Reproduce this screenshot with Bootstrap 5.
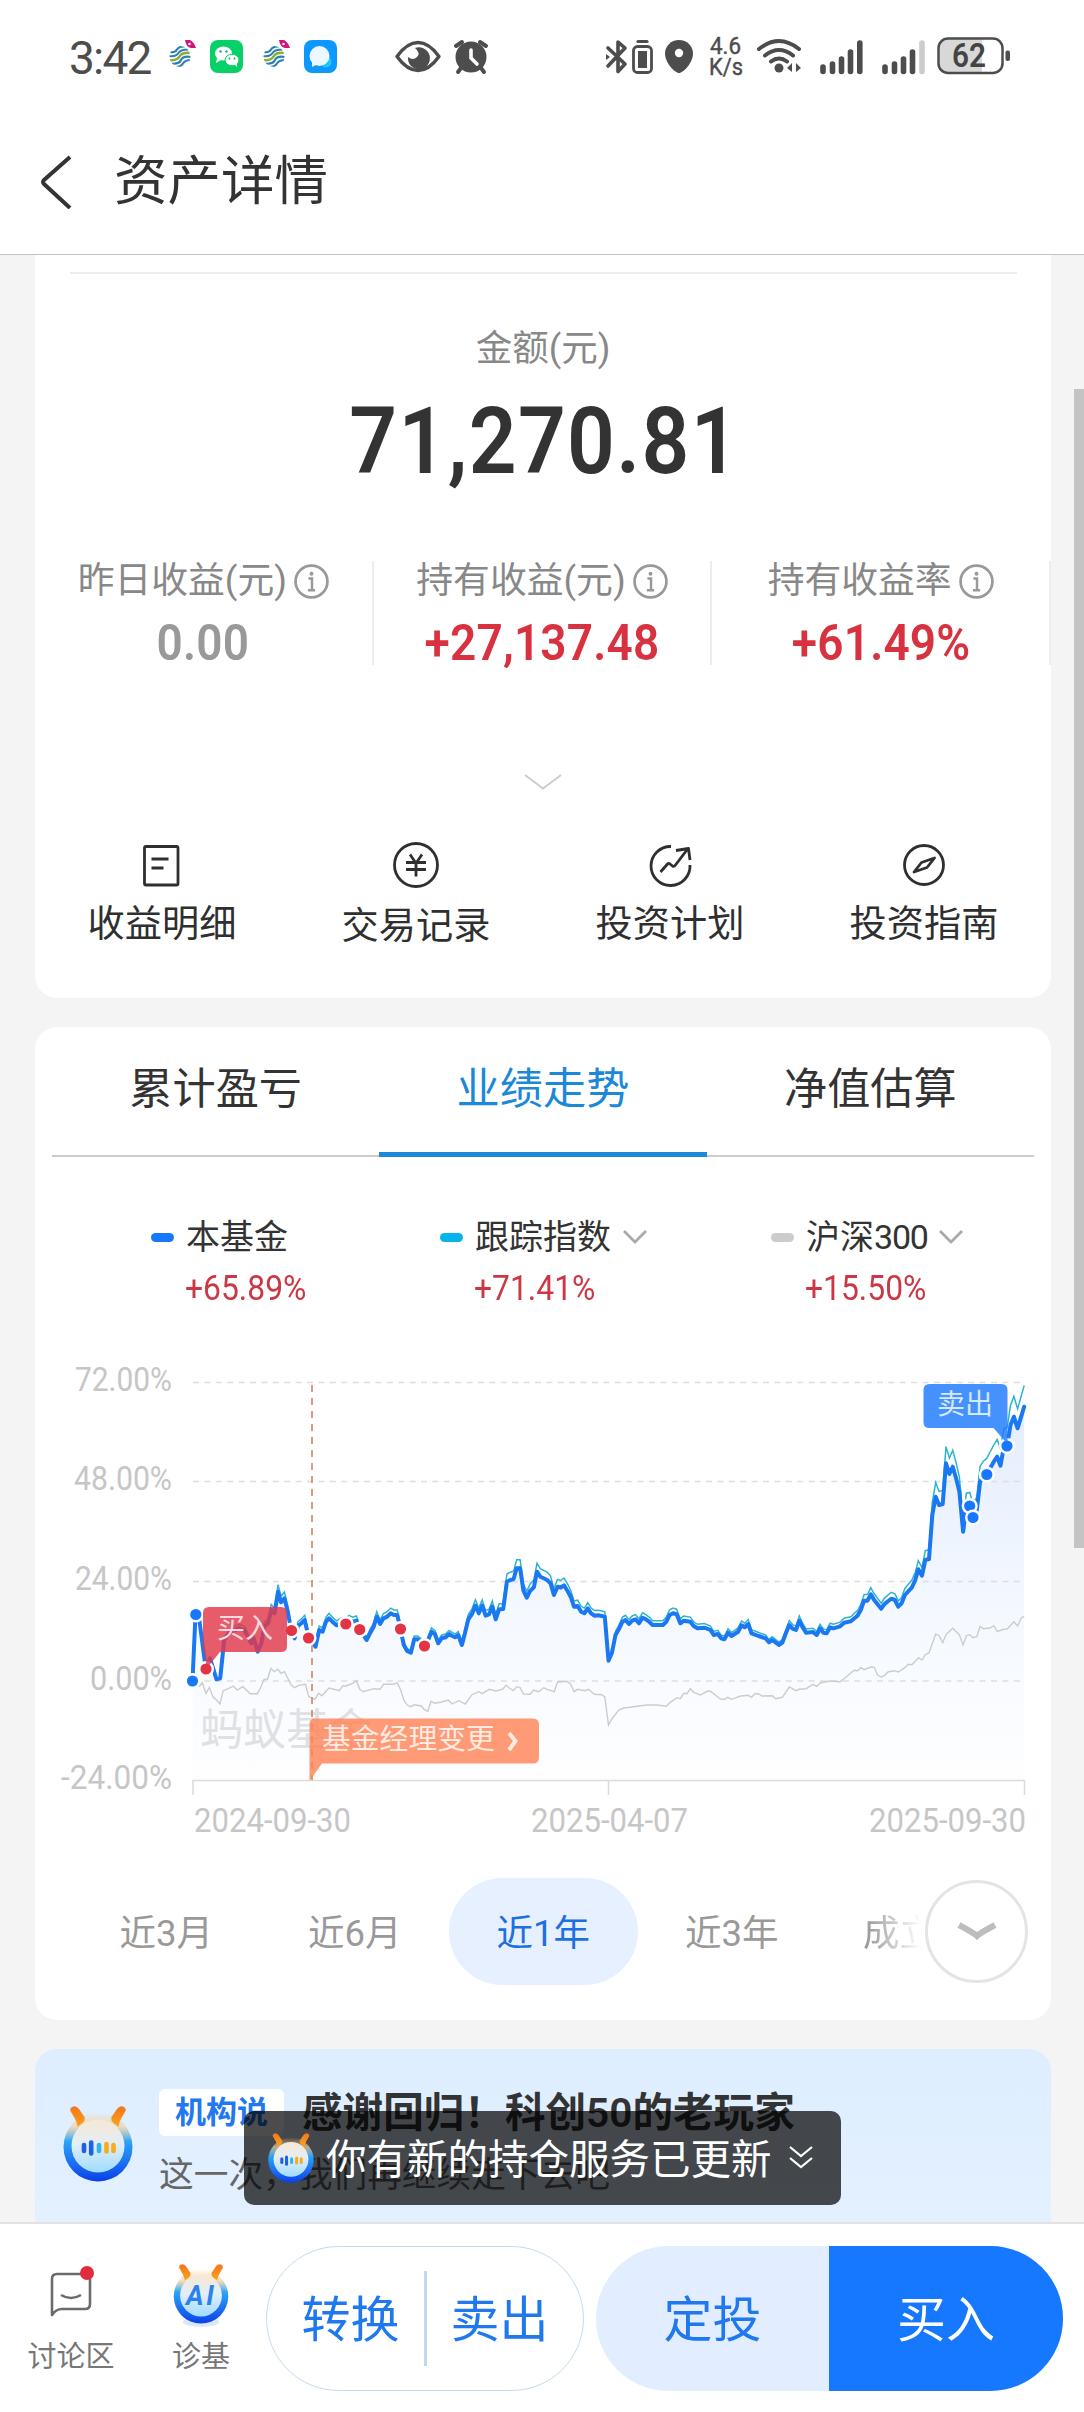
<!DOCTYPE html>
<html lang="zh-CN">
<head>
<meta charset="utf-8">
<meta name="viewport" content="width=device-width, initial-scale=1">
<title>资产详情</title>
<link href="https://cdn.jsdelivr.net/npm/bootstrap@5.3.0/dist/css/bootstrap.min.css" rel="stylesheet">
<style>
body{background:#f4f4f4;font-family:Roboto,"Noto Sans CJK SC",sans-serif;color:#333;height:2412px;overflow:hidden}
svg{display:block;flex:none}
svg text{font-family:Roboto,"Noto Sans CJK SC",sans-serif}
.top-area{height:255px;border-bottom:1px solid #c4c4c4}
.status-row{height:110px;padding-left:69px}
.clock{font-size:46px;line-height:50px;color:#4d4d4d;letter-spacing:-1.8px;width:96px;margin-top:33px}
.title-row{height:144px;padding:0 0 1px 41px}
.page-title{font-size:53.5px;line-height:60px;margin:0 0 0 41px;font-weight:400}
.panel{margin:0 33px 29px 35px;background:#fff;border-radius:22px}
.panel-asset{height:743px;border-radius:0 0 22px 22px;padding-top:17px}
.thin-line{height:2px;background:#ededed;margin:0 34px 0 35px}
.amount-label{font-size:36.5px;line-height:50px;color:#888;margin-top:50px}
.amount{font-size:92px;line-height:92px;font-weight:600;margin-top:22px;margin-bottom:-2px;letter-spacing:1.5px;padding-left:4px}
.din{display:inline-block;transform:scaleX(.91);white-space:nowrap}
.stat-row{margin-top:75px;height:104px}
.stat{border-right:2px solid #ededed}
.stat-name{font-size:36.8px;line-height:38px;color:#888;gap:7px;padding-top:1px}
.stat-num{font-size:50.5px;line-height:44px;font-weight:600;margin-top:21px;color:#999;letter-spacing:.2px}
.up{color:#d8313f}
.act{font-size:37.2px;line-height:40px;color:#2f2f2f}
.act svg{margin:0 auto 16px}
.panel-trend{height:993px}
.trend-tabs{margin:0 17px;height:130px;border-bottom:2px solid #ccc}
.trend-tabs .nav-link{font-size:43.2px;line-height:126px;height:130px;padding:0;color:#333;border-bottom:5px solid transparent;border-radius:0}
.trend-tabs .nav-link.active{color:#1c88d8;border-color:#1c88d8}
.legend-row{padding:60px 0 0 116px}
.lg1{width:289px}.lg2{width:331px}
.lg-name{font-size:34px;line-height:42px;height:40px}
.lg-mark{width:23px;height:9px;border-radius:5px;margin-right:12px}
.lg-pct{font-size:35px;line-height:42px;height:40px;margin:11px 0 0 34px;color:#cb3844}
.lg-pct .din{transform-origin:left}
.lg-num{display:inline-block;letter-spacing:-1.2px}
.chart-box{margin-top:32px}
.range-row{margin:38px 0 0 37px;height:107px;width:960px}
.range{width:188.5px;height:107px;line-height:111px;font-size:36.5px;color:#999;border-radius:54px}
.range.on{background:#e6f0ff;color:#1e6fe0}
.range-last{width:100px;padding-left:37px;overflow:hidden;-webkit-mask-image:linear-gradient(90deg,#000 40px,transparent 95px);white-space:nowrap}
.more-btn{width:103px;height:103px;border:3px solid #e4e4e4;background:#fff}
.panel-tip{height:173px;margin-bottom:0;border-radius:22px 22px 0 0;background:linear-gradient(#deeefe,#e3f0ff);padding:40px 0 0 28px}
.tip-badge{background:#fff;color:#2278ee;font-weight:600;font-size:31px;line-height:47px;height:47px;border-radius:6px;padding:0 16px;margin-right:18px}
.tip-title{font-size:40.6px;line-height:49px;font-weight:600;color:#333}
.tip-sub{font-size:34.7px;line-height:44px;color:#666;margin-top:15px}
.toast-bar{position:absolute;left:209px;top:62px;width:597px;height:94px;border-radius:10px;background:rgba(0,0,0,.7);color:#fff;font-size:40.5px;line-height:48px;padding:0 0 0 23px;white-space:nowrap}
.toast-msg{padding-top:4px}
.bottom-bar{height:190px;border-top:2px solid #e2e2e2;background:#fff}
.mini{width:114px;padding-top:37px;font-size:29px;line-height:34px;color:#777}
.mini svg{margin:0 auto 17px}
.pill{height:145px;margin-top:22px;font-size:49px;color:#1f78ee;border-radius:73px;overflow:hidden;line-height:141px}
.pill-line{width:318px;border:1.5px solid #c4dbef}
.pill-line span{padding-top:4px}
.pill-line i{width:3px;height:95px;background:#bfd8f0;margin:0 24px}
.pill-solid{width:467px;margin-left:12px;background:#e2eeff}
.pill-solid b{font-weight:400;width:233px;height:100%;padding-top:4px}
.pill-solid b+b{background:#1677ff;color:#fff;width:234px}
.scroll-thumb{position:absolute;left:1074px;top:389px;width:10px;height:1159px;background:#c4c4c4}
</style>
</head>
<body class="position-relative">
<svg width="0" height="0" class="position-absolute">
<defs>
<linearGradient id="ring" x1="0" y1="0" x2="0" y2="1"><stop offset="0" stop-color="#ffc070" stop-opacity="0"/><stop offset=".2" stop-color="#f2d3a6" stop-opacity=".7"/><stop offset=".42" stop-color="#2aa4f5"/><stop offset=".75" stop-color="#1a6cf2"/><stop offset="1" stop-color="#0a3fe6"/></linearGradient>
<linearGradient id="face" x1="0" y1="0" x2="0" y2="1"><stop offset="0" stop-color="#f7e8d2"/><stop offset=".45" stop-color="#e3eef6"/><stop offset="1" stop-color="#9fdcff"/></linearGradient>
<linearGradient id="ant" x1="0" y1="0" x2="0" y2="1"><stop offset="0" stop-color="#f5741b"/><stop offset="1" stop-color="#fba61c"/></linearGradient>
<clipPath id="globe"><circle cx="11" cy="17.500" r="10.500"/></clipPath>
<symbol id="bot" viewBox="0 0 70 76"><circle cx="35" cy="41" r="34.500" fill="url(#ring)"/><g fill="url(#ant)"><path d="M9 1q4-2 7 2l5.500 8q1 4-2 6l-5 4q-1-6-3-9L8 6q-2-3 1-5z"/><path d="M61 1q-4-2-7 2l-5.500 8q-1 4 2 6l5 4q1-6 3-9L62 6q2-3-1-5z"/></g><circle cx="35" cy="40" r="26.500" fill="url(#face)"/></symbol>
<symbol id="botbars" viewBox="0 0 70 76"><use href="#bot"/><g stroke-width="4.600" stroke-linecap="round"><path d="M21 39v6" stroke="#1f5fe0"/><path d="M28.200 36.500v11" stroke="#1c62e8"/><path d="M36 39v6" stroke="#2fb4f0"/><path d="M43.500 38v7.500M50.500 39v6" stroke="#f8ab1d"/></g></symbol>
<symbol id="cmcc" viewBox="0 0 28 30"><g fill="none" clip-path="url(#globe)"><path d="M0 13q6 1 8-2.500t8-3M0 17q7 1 9.500-3t11.500-3.500" stroke="#2b7fb5" stroke-width="2.100"/><path d="M0 21q8 1 10.500-3.500t12-3.500" stroke="#8aae2e" stroke-width="2.500"/><path d="M2 24.500q8 1 10-3.500t10-3M6 28q6 0 8-3.500t8-3.500" stroke="#2b7fb5" stroke-width="2.100"/></g><path d="M16 1h5q4 2 6 8h-5q-5-1-6-8z" fill="#cf1578"/><circle cx="20.500" cy="5" r="1.300" fill="#fff"/></symbol>
<symbol id="info" viewBox="0 0 34 34"><circle cx="17" cy="17" r="15.500" fill="none" stroke="#999" stroke-width="2.600"/><circle cx="17" cy="9.500" r="1.900" fill="#999"/><path d="M14 14h3.500v11M13.500 25.500h7" fill="none" stroke="#999" stroke-width="2.400"/></symbol>
</defs>
</svg>

<header class="bg-white top-area">
  <div class="status-row d-flex">
    <div class="clock">3:42</div>
    <svg width="330" height="50" viewBox="165 32 330 50" style="margin-top:32px">
      <use href="#cmcc" x="169" y="39" width="28" height="30"/>
      <rect x="210" y="40" width="33" height="33" rx="8" fill="#06d167"/>
      <ellipse cx="223.500" cy="53.500" rx="8.500" ry="7" fill="#fff"/><path d="M217 58l-1 5 5-3z" fill="#fff"/><ellipse cx="232" cy="60" rx="7" ry="5.800" fill="#fff" stroke="#06d167"/><path d="M234 64l3 3v-4z" fill="#fff"/><g fill="#06b85c"><circle cx="220.500" cy="51.500" r="1.200"/><circle cx="226.500" cy="51.500" r="1.200"/><circle cx="229.500" cy="58.500" r="1"/><circle cx="234.500" cy="58.500" r="1"/></g>
      <use href="#cmcc" x="263" y="39" width="28" height="30"/>
      <rect x="304" y="40" width="33" height="33" rx="8" fill="#0c98ff"/><circle cx="326" cy="62" r="5.500" fill="#20c6ff"/><circle cx="319.500" cy="56" r="10" fill="#edf7ff"/><path d="M312 60v7l6-3z" fill="#edf7ff"/>
      <path d="M397 56.500q10-14 21-14t21 14q-10 14-21 14t-21-14z" fill="none" stroke="#4d4d4d" stroke-width="3.400" stroke-linejoin="round"/><path d="M415 48a11 11 0 1 1-7 9q5 4 9 0t-2-9z" fill="#4d4d4d"/>
      <g stroke="#4d4d4d" stroke-width="4" stroke-linecap="round"><circle cx="471" cy="57" r="13.500" fill="#4d4d4d"/><path d="M456 46l6-4M486 46l-6-4M461 68l-3 4M481 68l3 4"/></g><path d="M471 50v8l6 6" fill="none" stroke="#fff" stroke-width="3.600" stroke-linecap="round"/>
    </svg>
    <svg width="415" height="50" viewBox="600 32 415 50" style="margin-left:105px;margin-top:32px">
      <g fill="none" stroke="#4d4d4d" stroke-width="3.600" stroke-linejoin="round" stroke-linecap="round"><path d="M608 48l17 16-7 7.500V42l7 6-17 18"/></g><path d="M606 54l4 3-4 3z" fill="#4d4d4d"/>
      <path d="M638 41.500h9" stroke="#4d4d4d" stroke-width="3.200" stroke-linecap="round"/><rect x="633.500" y="46.500" width="18" height="26" rx="4" fill="none" stroke="#4d4d4d" stroke-width="2.800"/><rect x="638" y="51" width="9" height="17" fill="#4d4d4d"/>
      <path d="M679 40c-8 0-14 6-14 13.500C665 63 675 73 679 73s14-10 14-19.500C693 46 687 40 679 40z" fill="#4d4d4d"/><circle cx="679" cy="53" r="4.200" fill="#fff"/>
      <text x="710" y="54" font-size="24" fill="#4d4d4d" stroke="#4d4d4d" stroke-width=".4" textLength="31" lengthAdjust="spacingAndGlyphs">4.6</text>
      <text x="709" y="75" font-size="24" fill="#4d4d4d" stroke="#4d4d4d" stroke-width=".4" textLength="34" lengthAdjust="spacingAndGlyphs">K/s</text>
      <g fill="none" stroke="#4d4d4d" stroke-width="4" stroke-linecap="round"><path d="M759 49q20-16 40 0M765 55.500q14-11 28 0M771 61.500q8-6 16 0"/></g><circle cx="779" cy="68" r="4.500" fill="#4d4d4d"/><path d="M787 68l5-5v9zM801 68l-5-5v9z" fill="#4d4d4d"/>
      <g stroke="#4d4d4d" stroke-width="5.600" stroke-linecap="round"><path d="M823 67v4.500M832.500 64v7.500M841.500 59v12.500M850.500 52v19.500M859.800 43v28.500M885 67v4.500M894.500 64v7.500M903.500 59v12.500M912.500 52v19.500"/><path d="M922 43v28.500" stroke="#ccc"/></g>
      <path d="M948 39h34v35h-34q-9 0-9-9V48q0-9 9-9z" fill="#d8d8d8"/><rect x="938.500" y="38.500" width="64" height="34.500" rx="9.500" fill="none" stroke="#4d4d4d" stroke-width="2.500"/><rect x="1005.500" y="50.500" width="4.500" height="10.500" rx="2" fill="#4d4d4d"/>
      <text x="952" y="67" font-size="33" font-weight="600" fill="#444" textLength="34" lengthAdjust="spacingAndGlyphs">62</text>
    </svg>
  </div>
  <div class="title-row d-flex align-items-center">
    <svg width="32" height="54" viewBox="0 0 32 54"><path d="M29 2L3 25q-2 2 0 4l26 24" fill="none" stroke="#333" stroke-width="4"/></svg>
    <h1 class="page-title">资产详情</h1>
  </div>
</header>

<section class="panel panel-asset text-center">
  <div class="thin-line"></div>
  <div class="amount-label">金额(元)</div>
  <div class="amount"><span class="din">71,270.81</span></div>
  <div class="row g-0 stat-row">
    <div class="col stat"><div class="stat-name d-flex justify-content-center align-items-center">昨日收益(元)<svg width="35" height="35"><use href="#info"/></svg></div><div class="stat-num"><span class="din">0.00</span></div></div>
    <div class="col stat"><div class="stat-name d-flex justify-content-center align-items-center">持有收益(元)<svg width="35" height="35"><use href="#info"/></svg></div><div class="stat-num up"><span class="din">+27,137.48</span></div></div>
    <div class="col stat"><div class="stat-name d-flex justify-content-center align-items-center">持有收益率<svg width="35" height="35"><use href="#info"/></svg></div><div class="stat-num up"><span class="din">+61.49%</span></div></div>
  </div>
  <svg class="mx-auto" width="38" height="16" viewBox="0 0 38 16" style="margin-top:109px"><path d="M1 1l18 13.500L37 1" fill="none" stroke="#ccc" stroke-width="2"/></svg>
  <div class="row g-0" style="margin-top:52px">
    <div class="col act"><svg width="46" height="46" viewBox="0 0 46 46" fill="none" stroke="#2f2f2f" stroke-width="2.800"><rect x="5.500" y="4.500" width="33.500" height="38.500" rx="1.500"/><path d="M12.500 17h17M12.500 26h12"/></svg>收益明细</div>
    <div class="col act"><svg width="46" height="46" viewBox="0 0 46 46" fill="none" stroke="#2f2f2f" stroke-width="2.800"><circle cx="23" cy="23" r="21.500"/><path d="M17 12.500l5.500 8M29 12.500l-5.500 8M23 20.500v14M13 20.500h20M13 27.500h20"/></svg><div style="padding-top:2px">交易记录</div></div>
    <div class="col act"><svg width="46" height="46" viewBox="0 0 46 46" fill="none" stroke="#2f2f2f" stroke-width="2.800" stroke-linejoin="round"><path d="M24 4.500A19.500 19.500 0 1 0 43 23"/><path d="M13.500 30l7-8q1-1 2.500 0l2.500 2q1.500 1 3-1L41 6.500M29 8.500l12.500-2L43 18"/></svg>投资计划</div>
    <div class="col act"><svg width="46" height="46" viewBox="0 0 46 46" fill="none" stroke="#2f2f2f" stroke-width="2.800" stroke-linejoin="round"><circle cx="23" cy="23" r="19.500"/><path d="M33.500 16l-7.500 9.500-13 4.500 7.500-9.500z"/></svg>投资指南</div>
  </div>
</section>

<section class="panel panel-trend">
  <nav class="nav nav-justified trend-tabs flex-nowrap">
    <a class="nav-link">累计盈亏</a><a class="nav-link active">业绩走势</a><a class="nav-link">净值估算</a>
  </nav>
  <div class="d-flex legend-row">
    <div class="lg1"><div class="lg-name d-flex align-items-center"><span class="lg-mark" style="background:#1677ff"></span>本基金</div><div class="lg-pct"><span class="din">+65.89%</span></div></div>
    <div class="lg2"><div class="lg-name d-flex align-items-center"><span class="lg-mark" style="background:#06b4ea"></span>跟踪指数<svg width="24" height="16" viewBox="0 0 24 16" style="margin-left:12px"><path d="M1 2l11 11L23 2" fill="none" stroke="#aaa" stroke-width="2.800"/></svg></div><div class="lg-pct"><span class="din">+71.41%</span></div></div>
    <div><div class="lg-name d-flex align-items-center"><span class="lg-mark" style="background:#ccc"></span>沪深<span class="lg-num">300</span><svg width="24" height="16" viewBox="0 0 24 16" style="margin-left:11px"><path d="M1 2l11 11L23 2" fill="none" stroke="#aaa" stroke-width="2.800"/></svg></div><div class="lg-pct"><span class="din">+15.50%</span></div></div>
  </div>
  <svg class="chart-box" width="1016" height="500" viewBox="35 1340 1016 500">
    <defs><linearGradient id="area" gradientUnits="userSpaceOnUse" x1="0" y1="1400" x2="0" y2="1780"><stop offset="0" stop-color="#e4edfd"/><stop offset=".6" stop-color="#f5f9ff"/><stop offset="1" stop-color="#fefeff"/></linearGradient></defs>
    <path id="fund-area" fill="url(#area)"/>
    <path d="M193 1382.500H1024M193 1481.500H1024M193 1581.500H1024M193 1681H1024" stroke="#dedede" stroke-width="1.600" stroke-dasharray="6 5.400" fill="none"/>
    <path d="M193 1795v-14.500H1024.500V1795M608.500 1781v14" stroke="#dcdcdc" stroke-width="1.600" fill="none"/>
    <text x="200" y="1745" font-size="43" fill="#dfe0e3">蚂蚁基金</text>
    <path id="csi-line" fill="none" stroke="#ccc" stroke-width="1.400"/>
    <path id="index-line" fill="none" stroke="#2eb3cf" stroke-width="1.500"/>
    <path id="fund-line" fill="none" stroke="#1a78f2" stroke-width="4" stroke-linejoin="round" stroke-linecap="round"/>
    <path d="M312 1385V1780" stroke="#d9916f" stroke-width="1.800" stroke-dasharray="7 6"/>
    <g font-size="33" fill="#c6c6c6">
      <text x="75" y="1391" textLength="97" lengthAdjust="spacingAndGlyphs">72.00%</text>
      <text x="74" y="1490" textLength="98" lengthAdjust="spacingAndGlyphs">48.00%</text>
      <text x="75" y="1589.500" textLength="97" lengthAdjust="spacingAndGlyphs">24.00%</text>
      <text x="90" y="1689.500" textLength="82" lengthAdjust="spacingAndGlyphs">0.00%</text>
      <text x="61" y="1789" textLength="111" lengthAdjust="spacingAndGlyphs">-24.00%</text>
      <text x="194" y="1832" textLength="157" lengthAdjust="spacingAndGlyphs">2024-09-30</text>
      <text x="531" y="1832" textLength="157" lengthAdjust="spacingAndGlyphs">2025-04-07</text>
      <text x="869" y="1832" textLength="157" lengthAdjust="spacingAndGlyphs">2025-09-30</text>
    </g>
    <g stroke="#fff" stroke-width="2.400"><g fill="#1677ff"><circle cx="192.500" cy="1681" r="6.800"/><circle cx="195.800" cy="1614.500" r="6.800"/><circle cx="969.700" cy="1506" r="6.800"/><circle cx="973" cy="1517.500" r="6.800"/><circle cx="986.800" cy="1474.500" r="6.800"/><circle cx="1007" cy="1446" r="6.800"/></g>
    <g fill="#e23445"><circle cx="206" cy="1669" r="6.800"/><circle cx="291.500" cy="1630.500" r="6.800"/><circle cx="308.500" cy="1638" r="6.800"/><circle cx="345.800" cy="1624" r="6.800"/><circle cx="359.700" cy="1629.500" r="6.800"/><circle cx="400.500" cy="1629" r="6.800"/><circle cx="424.500" cy="1646" r="6.800"/></g></g>
    <path d="M209 1607h72q6 0 6 6v33q0 6-6 6h-61l-13 16-3-17q-1-1-1-5v-33q0-6 6-6z" fill="#e2384a" fill-opacity=".82"/>
    <text x="217" y="1637.500" font-size="28" fill="#ffd9dd">买入</text>
    <path d="M929.500 1384h72q6 0 6 6v54l-14-16h-64q-6 0-6-6v-32q0-6 6-6z" fill="#1677ff" fill-opacity=".8"/>
    <text x="937" y="1413.500" font-size="28" fill="#d6e8ff">卖出</text>
    <path d="M315 1718.500h218q6 0 6 6v33q0 6-6 6H322l-12.500 17.500v-57q0-5.500 5.500-5.500z" fill="#ff8458" fill-opacity=".82"/>
    <text x="322" y="1748.500" font-size="28.800" fill="#ffebe2">基金经理变更</text>
    <path d="M509 1733l6.500 8-6.500 9" fill="none" stroke="#ffebe2" stroke-width="4"/>
  </svg>
  <div class="d-flex range-row position-relative text-center">
    <div class="range">近3月</div><div class="range">近6月</div><div class="range on">近1年</div><div class="range">近3年</div><div class="range range-last text-start">成立来</div>
    <div class="more-btn rounded-circle d-flex align-items-center justify-content-center position-absolute" style="left:853px;top:2px"><svg width="40" height="22" viewBox="0 0 40 22"><path d="M2 4q15 8 18 11 3-3 18-11" fill="none" stroke="#bdbdbd" stroke-width="6"/></svg></div>
  </div>
</section>

<section class="panel panel-tip position-relative d-flex">
  <svg width="70" height="76" style="margin:17px 26px 0 0"><use href="#botbars"/></svg>
  <div>
    <div class="d-flex"><span class="tip-badge">机构说</span><span class="tip-title">感谢回归！科创50的老玩家</span></div>
    <div class="tip-sub">这一次，我们再继续走下去吧</div>
  </div>
  <div class="toast-bar d-flex align-items-center"><svg width="48" height="50" style="margin-right:11px"><use href="#botbars"/></svg><span class="toast-msg">你有新的持仓服务已更新</span><svg width="26" height="26" viewBox="0 0 26 26" style="margin-left:16px"><path d="M2 2l11 9 11-9M2 13l11 9 11-9" fill="none" stroke="#fff" stroke-width="2.200"/></svg></div>
</section>

<footer class="bottom-bar d-flex text-center">
  <div class="mini" style="margin-left:14px"><svg width="46" height="62" viewBox="48 2261 46 62"><path d="M52 2315V2279q0-5 5-5h28q5 0 5 5v25q0 5-5 5H62q-6 0-10 6z" fill="none" stroke="#6b6b6b" stroke-width="2.600" stroke-linejoin="round"/><path d="M61 2295q10 6 20 0" fill="none" stroke="#6b6b6b" stroke-width="2.600"/><circle cx="87" cy="2273" r="7" fill="#e02c3c"/></svg>讨论区</div>
  <div class="mini" style="margin-left:16px"><svg width="70" height="66" viewBox="-7 -3 70 66" style="margin-bottom:13px"><ellipse cx="28" cy="58" rx="18" ry="5" fill="#dce6ff"/><use href="#bot" x="0" y="0" width="56" height="60"/><text x="13" y="41" font-size="27" font-weight="700" font-style="italic" fill="#2b82ea" textLength="28">AI</text></svg>诊基</div>
  <div class="pill pill-line d-flex align-items-center justify-content-center" style="margin-left:8px"><span>转换</span><i></i><span>卖出</span></div>
  <div class="pill pill-solid d-flex"><b class="d-flex align-items-center justify-content-center">定投</b><b class="d-flex align-items-center justify-content-center">买入</b></div>
</footer>
<div class="scroll-thumb"></div>

<script>
const fund = ["451,993 460,793 470,800 490,955 503,925 512,955 522,988 533,985 545,870 560,850 575,840 590,835 605,840 615,860 625,880 632,865 644,905 655,880 663,830 675,820 684,780 694,790 704,725 713,757 723,745 733,785 743,842 753,865 763,828 773,820 783,810 793,855 803,870 815,890 826,840 836,845 846,815 855,805 865,815 877,826 890,818 904,820 914,810 925,815 936,812 946,838 956,855 966,870 976,850 987,830 996,800 1006,822 1016,805 1027,800 1037,790 1047,795 1057,795 1066,836 1076,885 1086,903 1097,908 1107,868 1117,868 1127,875 1137,888 1147,872 1158,845 1168,852 1178,880 1188,865 1200,862 1210,852 1218,857 1228,862 1237,855 1248,885 1258,845 1267,808 1278,792 1288,767 1298,790 1308,767 1318,797 1328,793 1338,770 1348,808 1358,778 1370,777 1381,695 1391,690 1401,687 1410,655 1420,655 1430,722 1440,743 1450,722 1461,712 1470,665 1480,680 1490,685 1500,690 1510,700 1520,735 1531,710",
"2,713 12,706 22,722 32,740 42,770 53,768 63,785 73,790 83,775 93,790 103,797 115,796 134,800 145,932 155,910 166,855 176,838 187,815 196,810 206,822 216,812 226,808 236,820 247,803 257,808 267,815 277,825 308,825 318,815 328,795 338,790 349,793 360,820 370,812 390,815 400,828 411,835 432,833 450,840 460,855 472,852 482,865 492,868 503,848 513,858 533,845 543,826 553,832 563,822 573,850 594,858 615,865 625,877 635,870 655,885 665,878 675,852 686,825 696,836 706,840 716,812 726,832 736,848 757,846 768,855 778,835 788,848 798,850 808,832 818,835 838,829 850,818 870,814 890,797 900,780 910,752 920,752 930,733 940,750 961,776 971,762 991,746 1002,750 1012,770 1022,760 1032,735 1053,712 1063,690 1072,658 1083,677 1093,630 1104,627 1114,495 1124,440 1134,465 1145,462 1155,340 1165,372 1175,350 1185,385 1195,425 1206,545 1216,470 1226,468 1236,502 1247,480 1257,395 1267,380 1277,373 1287,355 1298,335 1308,320 1318,347 1328,290 1338,287 1348,225 1358,200 1369,235 1389,170"];
const csi = ["470,1010 480,998 491,1030 501,1012 512,1042 522,1050 532,1062 542,1022 552,1018 572,1008 583,1020 600,1010 622,1031 643,1031 653,1012 663,988 673,987 683,955 693,965 703,958 713,970 723,965 733,985 743,1005 753,1013 765,1006 785,1003 795,1040 813,1048 824,1030 834,1037 855,1014 885,1022 895,1008 905,1008 925,1000 936,992 946,1018 956,1025 988,1016 1006,1018 1016,1003 1045,1003 1057,998 1067,1020 1077,1052 1087,1066 1097,1070 1107,1064 1128,1068 1137,1079 1147,1084 1157,1054 1167,1060 1188,1056 1208,1050 1219,1062 1239,1052 1258,1062 1278,1034 1298,1025 1308,1031 1329,1018 1348,1023 1368,1018 1379,1006 1389,1015 1400,1022 1410,1010 1420,1013 1430,1032 1450,1033 1460,1020 1475,1025 1490,1013 1500,1018 1521,1025 1531,996",
"0,996 20,994 32,1003 42,1025 53,1018 75,1022 85,1018 103,1033 125,1034 134,1041 145,1125 155,1107 166,1093 176,1080 190,1074 210,1072 236,1068 260,1065 290,1065 318,1069 330,1057 350,1043 360,1046 370,1030 380,1031 390,1016 400,1027 420,1035 440,1024 450,1024 480,1047 492,1048 502,1042 513,1048 540,1038 563,1036 573,1042 583,1031 594,1031 604,1038 635,1037 645,1046 665,1042 686,1011 706,1022 716,1018 736,1016 757,1003 768,1009 780,998 808,993 838,995 860,978 880,961 890,962 900,953 910,959 930,951 940,952 950,975 961,981 971,977 981,966 1000,962 1012,966 1032,953 1042,943 1053,944 1073,923 1083,930 1093,914 1104,908 1124,852 1134,857 1145,878 1155,854 1175,835 1195,855 1206,885 1216,857 1226,854 1236,863 1247,860 1257,829 1267,836 1287,834 1298,827 1308,844 1328,838 1338,837 1358,815 1369,828 1380,804 1389,799"];
const points = s => s.flatMap((half, i) => half.split(" ").map(p => {
  const [x, y] = p.split(",").map(Number);
  return [i ? 560 + x / 2.992 : 40 + x / 2.958, 1350 + y / 3];
}));
const path = a => "M" + a.map(p => p[0].toFixed(1) + " " + p[1].toFixed(1)).join("L");
const f = points(fund);
const set = (id, d) => document.getElementById(id).setAttribute("d", d);
set("fund-line", path(f));
set("fund-area", path(f) + "L1024 1780L193 1780Z");
set("csi-line", path(points(csi)));
set("index-line", path(f.filter(p => p[0] > 222).map(p => [p[0], p[1] - .077 * (1681 - p[1])])));
</script>
<script src="https://cdn.jsdelivr.net/npm/bootstrap@5.3.0/dist/js/bootstrap.bundle.min.js"></script>
</body>
</html>
